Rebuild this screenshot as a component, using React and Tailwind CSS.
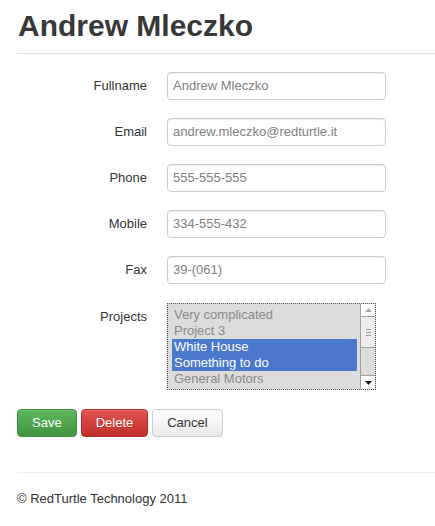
const fields = [
  { label: 'Fullname', value: 'Andrew Mleczko' },
  { label: 'Email', value: 'andrew.mleczko@redturtle.it' },
  { label: 'Phone', value: '555-555-555' },
  { label: 'Mobile', value: '334-555-432' },
  { label: 'Fax', value: '39-(061)' },
]

const projects = [
  { name: 'Very complicated', selected: false },
  { name: 'Project 3', selected: false },
  { name: 'White House', selected: true },
  { name: 'Something to do', selected: true },
  { name: 'General Motors', selected: false },
]

function ProjectList() {
  return (
    <div className="flex w-[209px] h-[87px] border border-dotted border-[#555] bg-[#dcdcdc]">
      <div className="flex-1 pl-[4px] pr-[3px] pt-[3px] overflow-hidden">
        {projects.map((p) => (
          <div
            key={p.name}
            className={`h-[16px] leading-[16px] px-[2px] text-[13px] whitespace-nowrap ${
              p.selected ? 'bg-[#4a78cc] text-white' : 'text-[#8a8a8a]'
            }`}
          >
            {p.name}
          </div>
        ))}
      </div>
      <div className="w-[15px] flex flex-col border-l border-[#a0a0a0] bg-[#dcdcdc]">
        <div className="h-[13px] bg-white border-b border-[#a0a0a0] flex items-center justify-center">
          <svg width="7" height="4" viewBox="0 0 7 4">
            <path d="M0 4 L3.5 0 L7 4 Z" fill="#a8a8a8" />
          </svg>
        </div>
        <div className="h-[31px] bg-[#eeeeee] border-b border-[#a0a0a0] flex flex-col items-center justify-center gap-[2px]">
          <div className="w-[5px] h-px bg-[#999]" />
          <div className="w-[5px] h-px bg-[#999]" />
          <div className="w-[5px] h-px bg-[#999]" />
        </div>
        <div className="flex-1" />
        <div className="h-[14px] bg-white border-t border-[#a0a0a0] flex items-center justify-center">
          <svg width="7" height="4" viewBox="0 0 7 4">
            <path d="M0 0 L7 0 L3.5 4 Z" fill="#111" />
          </svg>
        </div>
      </div>
    </div>
  )
}

export default function App() {
  return (
    <div className="min-h-[526px] bg-white pl-[17px] text-[#333] font-['Liberation_Sans',Arial,sans-serif] text-[13px]">
      <h1 className="pt-[9px] pb-[11px] pl-px text-[30px] leading-[33px] font-bold text-[#383838]">
        Andrew Mleczko
      </h1>
      <div className="h-px bg-[#dedede]" />

      <div className="pt-[18px] flex flex-col gap-[18px]">
        {fields.map((f) => (
          <div key={f.label} className="flex gap-[20px]">
            <div className="w-[130px] h-[28px] flex items-center justify-end">{f.label}</div>
            <div className="w-[219px] h-[28px] border border-[#cccccc] rounded-[4px] shadow-[inset_0_1px_1px_rgba(0,0,0,0.075)] px-[5px] flex items-center text-[#808080]">
              {f.value}
            </div>
          </div>
        ))}
        <div className="flex gap-[20px] pt-px">
          <div className="w-[130px] h-[28px] flex items-center justify-end">Projects</div>
          <ProjectList />
        </div>
      </div>

      <div className="flex gap-[4px] pt-[19px]">
        <button className="h-[28px] px-[14px] rounded-[4px] border border-[#3e8f3e] bg-gradient-to-b from-[#5cb85c] to-[#419641] text-white text-[13px] shadow-[inset_0_1px_0_rgba(255,255,255,0.15)]">
          Save
        </button>
        <button className="h-[28px] px-[14px] rounded-[4px] border border-[#b92c28] bg-gradient-to-b from-[#e0534f] to-[#c12e2a] text-white text-[13px] shadow-[inset_0_1px_0_rgba(255,255,255,0.15)]">
          Delete
        </button>
        <button className="h-[28px] px-[14px] rounded-[4px] border border-[#cccccc] bg-gradient-to-b from-white to-[#e8e8e8] text-[#333] text-[13px]">
          Cancel
        </button>
      </div>

      <div className="h-px bg-[#eeeeee] mt-[35px]" />
      <p className="pt-[17px] leading-[18px]">© RedTurtle Technology 2011</p>
    </div>
  )
}
